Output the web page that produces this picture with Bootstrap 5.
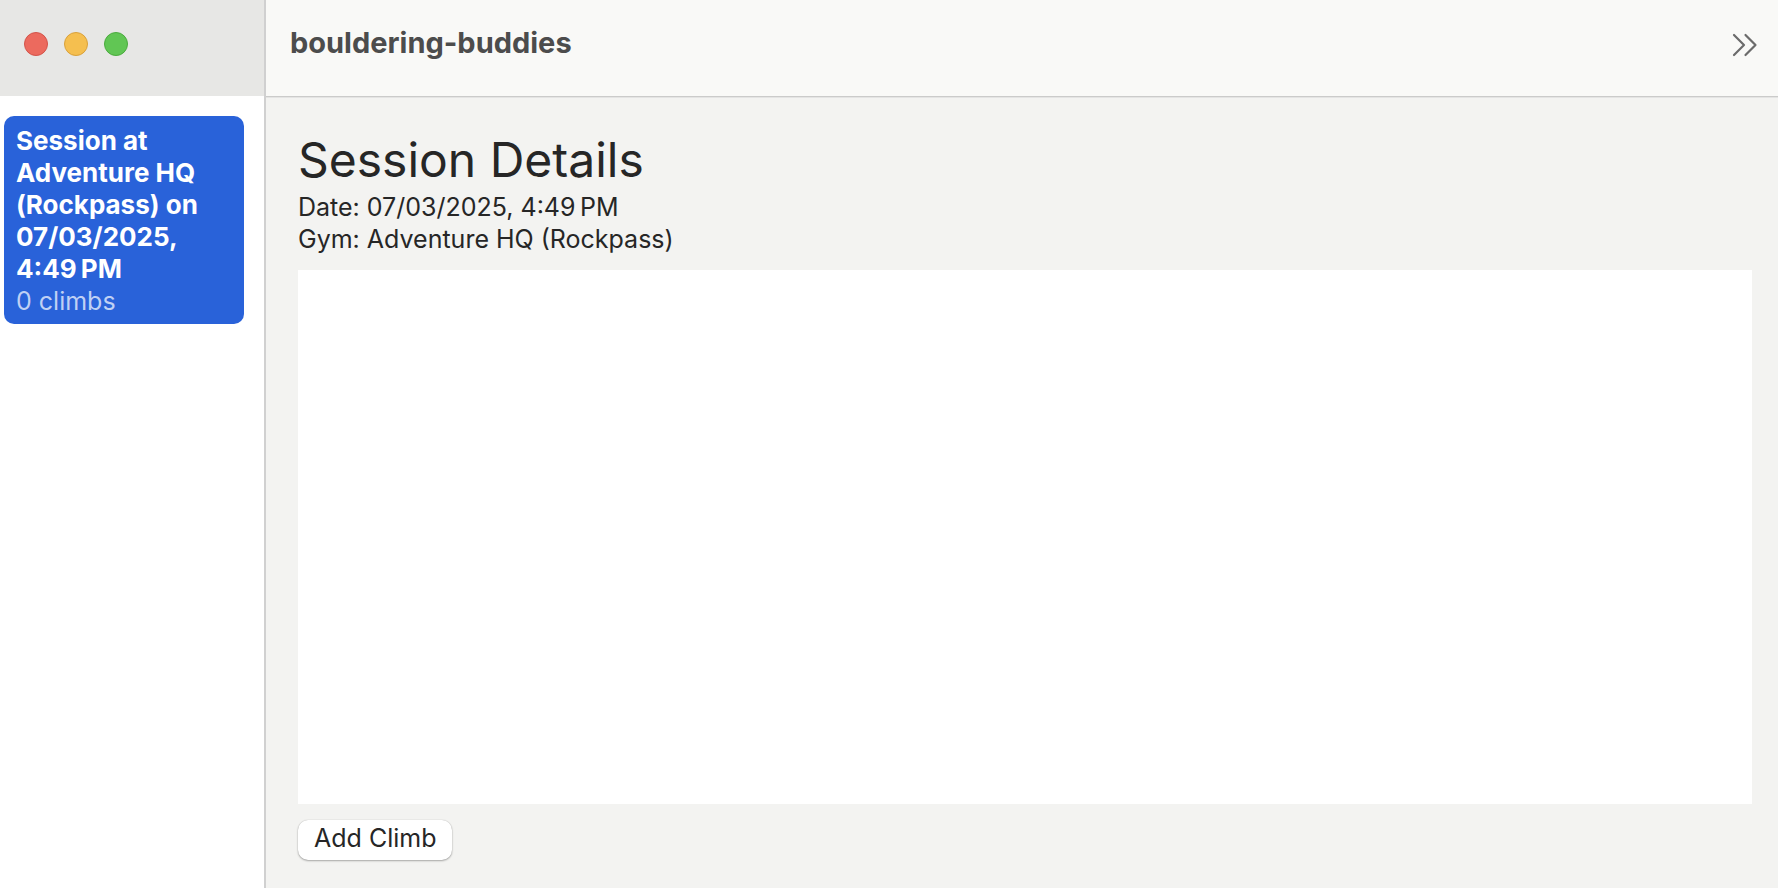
<!DOCTYPE html>
<html lang="en">
<head>
<meta charset="utf-8">
<meta name="viewport" content="width=device-width, initial-scale=1">
<title>bouldering-buddies</title>
<link href="https://cdn.jsdelivr.net/npm/bootstrap@5.3.0/dist/css/bootstrap.min.css" rel="stylesheet">
<style>
  body { font-family: Inter, "Liberation Sans", sans-serif; font-size: 25px; line-height: 32px; color: #262626; background: #f3f3f1; }
  .sidebar { width: 266px; border-right: 2px solid #d0d0d0; background: #fff; }
  .titlebar { height: 96px; background: #e7e7e5; padding: 0 24px 8px; gap: 16px; }
  .light { width: 24px; height: 24px; border-radius: 50%; border: 1px solid; padding: 0; }
  .light-close { background: #ec6a5e; border-color: #d3544a; }
  .light-min { background: #f5bf4f; border-color: #d9a13b; }
  .light-zoom { background: #61c654; border-color: #4bab3e; }
  .session { margin: 20px 20px 0 4px; padding: 9px 12px 7px; border-radius: 10px; background: #2962d9; color: #fff; text-decoration: none; }
  .session-name { font-size: 26px; font-weight: 700; }
  .session-count { color: #bfd0f4; }
  .toolbar { height: 97px; background: #f9f9f7; border-bottom: 1px solid #cbcbca; box-shadow: 0 1px 0 #e4e4e3; padding: 0 20px 8px 24px; }
  .app-name { font-size: 29px; font-weight: 700; line-height: 36px; padding-bottom: 2px; color: #4c4c4c; }
  .overflow-btn { color: #6b6b6b; }
  .detail { padding: 32px 26px 28px 32px; }
  .detail-title { font-size: 48px; line-height: 62px; font-weight: 400; }
  .climbs { margin: 15px 0 16px; background: #fff; }
  .add-btn { height: 40px; padding: 2px 16px 6px; border-radius: 10px; background: #fff; color: #262626; font-size: 25px; line-height: 32px; border: 0; box-shadow: 0 1px 2px rgba(0,0,0,.3), 0 0 1px rgba(0,0,0,.25); }
</style>
</head>
<body>
<div class="d-flex min-vh-100">
  <aside class="sidebar flex-shrink-0">
    <div class="titlebar d-flex align-items-center">
      <button type="button" class="light light-close" aria-label="Close"></button>
      <button type="button" class="light light-min" aria-label="Minimize"></button>
      <button type="button" class="light light-zoom" aria-label="Zoom"></button>
    </div>
    <nav aria-label="Sessions">
      <a href="#session" class="session d-block" aria-current="page">
        <div class="session-name">Session at Adventure HQ (Rockpass) on 07/03/2025, 4:49&#8239;PM</div>
        <div class="session-count">0 climbs</div>
      </a>
    </nav>
  </aside>
  <div class="flex-grow-1 d-flex flex-column">
    <header class="toolbar d-flex align-items-center justify-content-between">
      <div class="app-name">bouldering-buddies</div>
      <button type="button" class="overflow-btn btn p-0 border-0 d-flex" aria-label="More toolbar items">
        <svg width="26" height="26" viewBox="0 0 26 26" fill="none" stroke="currentColor" stroke-width="2.200" stroke-linecap="round" stroke-linejoin="round"><path d="M2 4 12 14 2 24M13.500 4 23.500 14 13.500 24"/></svg>
      </button>
    </header>
    <main id="session" class="detail flex-grow-1 d-flex flex-column">
      <h1 class="detail-title mb-0">Session Details</h1>
      <div>Date: 07/03/2025, 4:49&#8239;PM</div>
      <div>Gym: Adventure HQ (Rockpass)</div>
      <section class="climbs flex-grow-1" aria-label="Climbs"></section>
      <button type="button" class="add-btn btn align-self-start">Add Climb</button>
    </main>
  </div>
</div>
<script src="https://cdn.jsdelivr.net/npm/bootstrap@5.3.0/dist/js/bootstrap.bundle.min.js"></script>
</body>
</html>
